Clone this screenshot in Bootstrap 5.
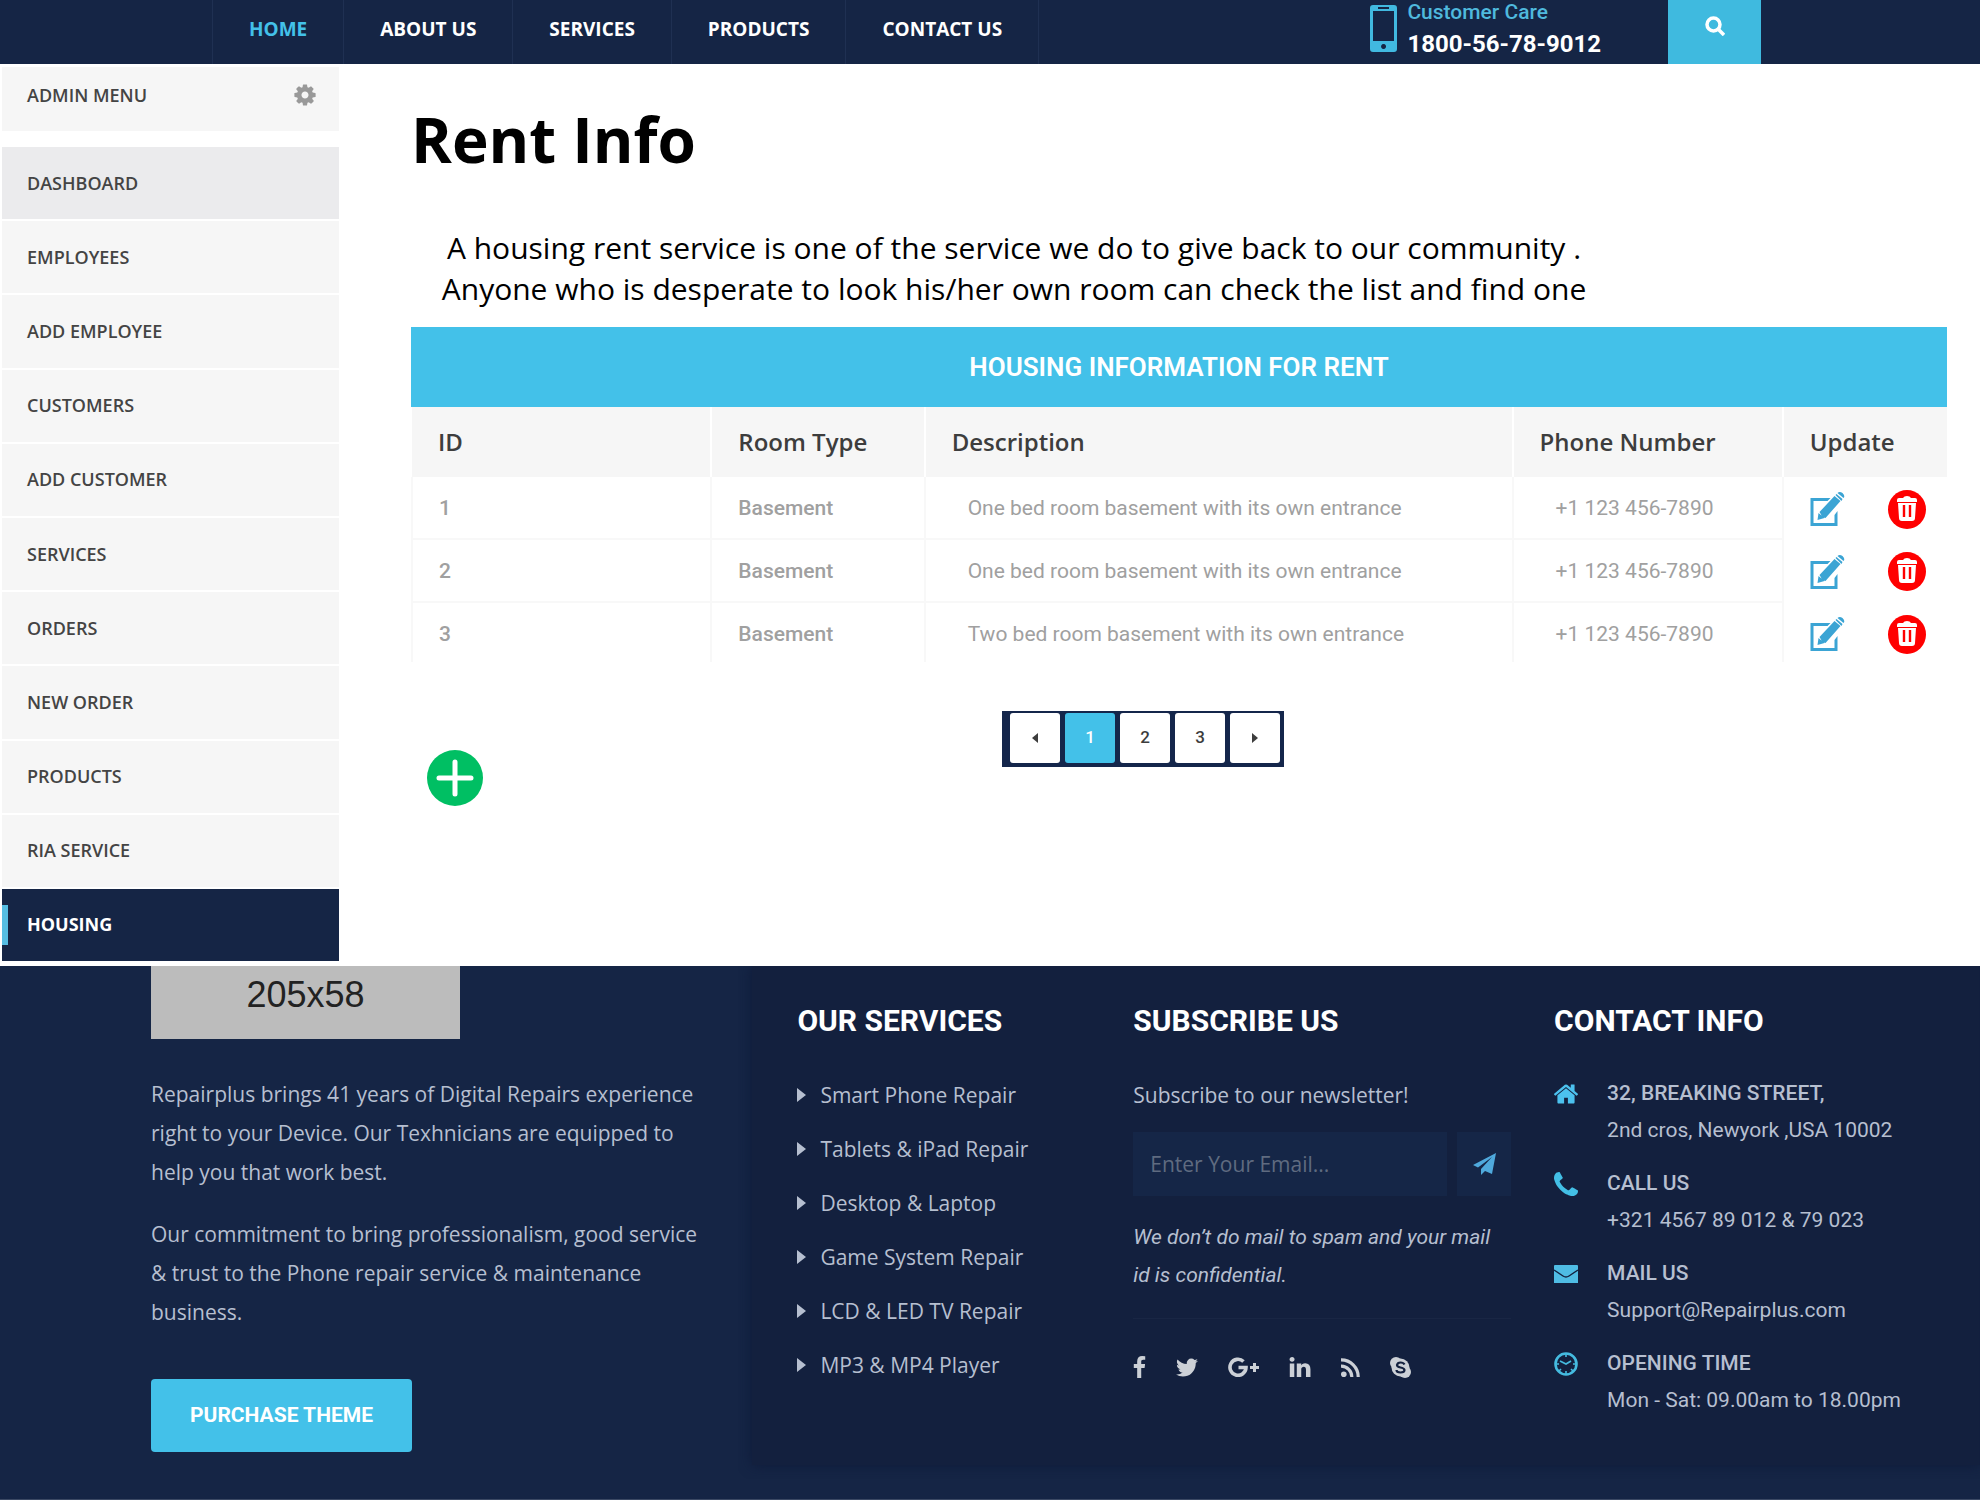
<!DOCTYPE html>
<html lang="en">
<head>
<meta charset="utf-8">
<meta name="viewport" content="width=device-width, initial-scale=1">
<title>Rent Info</title>
<link href="https://cdn.jsdelivr.net/npm/bootstrap@5.3.0/dist/css/bootstrap.min.css" rel="stylesheet">
<style>
  :root { --navy:#152545; --deep:#13203e; --sky:#43c1e9; --panel:#f6f6f6; }
  body { font-family:"Open Sans","Noto Sans",sans-serif; background:#fff; color:#000; }
  a { text-decoration:none; }
  svg { display:block; flex:none; }
  .roboto { font-family:Roboto,"Liberation Sans",sans-serif; }

  /* top bar */
  .topbar { background:var(--navy); height:64px; padding-left:212px; padding-right:219px; }
  .topbar .nav-link { padding:0 36px 6px; border-right:1px solid #1f3052; line-height:58px; font-size:19px; font-weight:700; color:#fff; }
  .topbar .nav-item:first-child .nav-link { border-left:1px solid #1f3052; }
  .topbar .nav-link.active { color:var(--sky); }
  .care { gap:10px; margin-right:67px; padding-top:5px; }
  .care-title { color:#4fb9dd; font-size:21px; line-height:20px; font-weight:500; padding-bottom:8px; margin-top:-3px; }
  .care-phone { color:#fff; font-size:24px; line-height:28px; font-weight:700; }
  .search-btn { width:93px; height:64px; background:#3fbadf; border:0; padding:0 0 12px; }

  /* sidebar */
  .side { width:339px; padding:3px 0 5px 2px; font-size:18px; font-weight:600; }
  .side-head { height:64px; background:var(--panel); padding:0 23px 8px 25px; color:#444; margin-bottom:16px; }
  .side-list { gap:2px; }
  .side-list a { background:var(--panel); color:#444; padding-left:25px; position:relative; }
  .side-list a.current { background:#ebebed; }
  .side-list a.picked { background:var(--navy); color:#fff; font-weight:700; }
  .side-list a.picked::before { content:""; position:absolute; left:0; top:16px; bottom:16px; width:6px; background:#55bde2; }

  /* content */
  .content { padding:35px 33px 160px 72px; min-width:0; }
  .content h1 { font-size:62px; line-height:80px; font-weight:700; margin:0 0 48px; }
  .intro { font-size:30px; line-height:41px; margin:0 330px 18px 0; text-align:center; white-space:nowrap; }
  .rent { table-layout:fixed; width:100%; margin:0; }
  .rent caption { caption-side:top; background:var(--sky); color:#fff; text-align:center; font-size:26px; line-height:80px; font-weight:600; padding:0; }
  .rent th, .rent td { border-right:2px solid #f8f8f8; }
  .rent tr > :last-child { border-right:0; }
  .rent thead th { background:var(--panel); border-right-color:#fff; color:#3d3d3d; font-size:24px; line-height:70px; font-weight:600; padding:0 0 0 26px; white-space:nowrap; }
  .rent tbody th, .rent tbody td { color:#a0a0a0; font-size:21px; line-height:55px; padding:4px 0 2px 26px; border-bottom:2px solid #f8f8f8; vertical-align:middle; white-space:nowrap; }
  .rent tbody th { font-weight:500; border-left:2px solid #f8f8f8; }
  .rent tbody td.kind { font-weight:500; }
  .rent tbody td.wide { padding-left:42px; }
  .rent tbody td:last-child { border-bottom:0; }
  .rent tbody tr:last-child > * { border-bottom:0; padding-bottom:0; }
  .acts { gap:43px; }
  .acts button, .add-btn { border:0; padding:0; background:none; }
  .tools { margin-top:49px; }
  .add-btn { margin:39px 0 0 16px; }
  .pager { margin-left:33.8%; background:#14264b; padding:2px 4px 4px 8px; gap:5px; height:56px; }
  .pager .page-link { width:50px; height:50px; border:0; border-radius:3px; padding:0; display:flex; align-items:center; justify-content:center; background:#fff; color:#3d3d3d; font-size:17px; font-weight:500; }
  .pager .active .page-link { background:var(--sky); color:#fff; }

  /* footer */
  .foot { background:var(--navy); color:#b6bfd0; border-bottom:1px solid #3b4964; padding-bottom:34px; }
  .about { width:38%; padding-left:151px; padding-right:40px; font-size:21px; line-height:39px; }
  .logo-box { width:309px; background:#bcbcbc; color:#222; font:36px/57px "Liberation Sans",Arial,sans-serif; padding-bottom:16px; text-align:center; margin-bottom:36px; }
  .about p { margin-bottom:23px; white-space:nowrap; }
  .buy { margin-top:24px; background:var(--sky); color:#fff; border:0; border-radius:4px; width:261px; height:73px; font-size:21px; font-weight:700; }
  .foot-main { width:62%; background:var(--deep); padding:37px 32px 46px 45px; box-shadow:0 0 12px #0e1a39; clip-path:inset(0 0 -14px -14px); display:grid; grid-template-columns:336fr 421fr 394fr; }
  .foot h2 { font-size:30px; line-height:36px; font-weight:700; color:#fff; margin:0 0 29px; }
  .links { font-size:21px; line-height:54px; }
  .links a { color:#b6bfd0; display:flex; align-items:center; gap:14px; }
  .news { font-size:21px; line-height:54px; margin-right:43px; }
  .news-form { gap:10px; margin:10px 0 22px; }
  .news-form input { height:64px; border:0; border-radius:0; background:#152647; color:#b6bfd0; font-size:21px; padding:0 17px; min-width:0; }
  .news-form input::placeholder { color:#5f6b80; opacity:1; }
  .news-form button { width:54px; height:64px; border:0; border-radius:0; background:#152647; padding:0; flex:none; display:flex; align-items:center; justify-content:center; }
  .note { font-size:21px; line-height:38px; font-style:italic; padding-bottom:24px; border-bottom:1px solid #192644; margin-bottom:37px; white-space:nowrap; }
  .social { gap:30px; }
  .social a { color:#ccd0d6; }
  .reach { gap:16px; margin-top:36px; font-size:21px; line-height:37px; }
  .reach li { display:flex; gap:29px; }
  .reach svg { margin-top:7px; }
  .reach strong { font-weight:500; display:block; }
</style>
</head>
<body>
<svg class="d-none" aria-hidden="true">
  <symbol id="edit" viewBox="0 0 34 34">
    <path d="M20 6H0v28h27V19l-3 4v8H3V9h14z" fill="#3ba4d4"/>
    <path d="M9 20 24 4l6 5-15 17-3-1zM25 3l1-1 6 5-1 2zM27 1q2-2 5 0 3 3 1 5zM8 21l6 5-7 2z" fill="#3ba4d4"/>
  </symbol>
  <symbol id="bin" viewBox="0 0 38 39">
    <ellipse cx="19" cy="19.500" rx="19" ry="19.500" fill="#f00"/>
    <path d="M9 10q0-2 2-2h4q1-2 4-2t4 2h4q2 0 2 2v2H9zM10 13h18l-1 15q0 3-3 3H14q-3 0-3-3z" fill="#fff"/>
    <path d="M16 15v12M22 15v12" stroke="#f00" stroke-width="2.400"/>
  </symbol>
  <symbol id="caret" viewBox="0 0 9 14"><path d="M0 0 9 7 0 14z" fill="currentColor"/></symbol>
</svg>

<header class="topbar d-flex">
  <nav aria-label="Main">
    <ul class="nav flex-nowrap">
      <li class="nav-item"><a class="nav-link active" href="#">HOME</a></li>
      <li class="nav-item"><a class="nav-link" href="#">ABOUT US</a></li>
      <li class="nav-item"><a class="nav-link" href="#">SERVICES</a></li>
      <li class="nav-item"><a class="nav-link" href="#">PRODUCTS</a></li>
      <li class="nav-item"><a class="nav-link" href="#">CONTACT US</a></li>
    </ul>
  </nav>
  <div class="care d-flex ms-auto roboto">
    <svg width="27" height="47" viewBox="0 0 27 47" aria-hidden="true"><path fill="#41b9e0" fill-rule="evenodd" d="M3 0h21q3 0 3 3v41q0 3-3 3H3q-3 0-3-3V3q0-3 3-3zM3 6v30h21V6zM8 2v2h11V2zM13.500 39a2.500 2.500 0 1 0 .1 0z"/></svg>
    <div>
      <div class="care-title">Customer Care</div>
      <div class="care-phone">1800-56-78-9012</div>
    </div>
  </div>
  <button class="search-btn d-flex align-items-center justify-content-center" type="button" aria-label="Search">
    <svg width="20" height="20" viewBox="0 0 20 20" fill="none" stroke="#fff" stroke-width="3.500"><circle cx="8.500" cy="8.500" r="6.500"/><path d="m13 13 6 6"/></svg>
  </button>
</header>

<div class="d-flex">
  <aside class="side d-flex flex-column flex-shrink-0">
    <div class="side-head d-flex align-items-center justify-content-between">
      <span>ADMIN MENU</span>
      <svg width="22" height="22" viewBox="100 100 1592 1592" fill="#999" aria-hidden="true"><path d="M1152 896q0-106-75-181t-181-75-181 75-75 181 75 181 181 75 181-75 75-181zm512-109v222q0 12-8 23t-20 13l-185 28q-19 54-39 91 35 50 107 138 10 12 10 25t-9 23q-27 37-99 108t-94 71q-12 0-26-9l-138-108q-44 23-91 38-16 136-29 186-7 28-36 28h-222q-14 0-24.500-8.500t-11.500-21.500l-28-184q-49-16-90-37l-141 107q-10 9-25 9-14 0-25-11-126-114-165-168-7-10-7-23 0-12 8-23 15-21 51-66.500t54-70.500q-27-50-41-99l-183-27q-13-2-21-12.500t-8-23.500v-222q0-12 8-23t19-13l186-28q14-46 39-92-40-57-107-138-10-12-10-24 0-10 9-23 26-36 98.500-107.500t94.500-71.500q13 0 26 10l138 107q44-23 91-38 16-136 29-186 7-28 36-28h222q14 0 24.500 8.500t11.500 21.500l28 184q49 16 90 37l142-107q9-9 24-9 13 0 25 10 129 119 165 170 7 8 7 22 0 12-8 23-15 21-51 66.500t-54 70.500q26 50 41 98l183 28q13 2 21 12.500t8 23.500z"/></svg>
    </div>
    <nav class="side-list d-flex flex-column flex-fill" aria-label="Admin">
      <a class="current d-flex align-items-center flex-fill" href="#">DASHBOARD</a>
      <a class="d-flex align-items-center flex-fill" href="#">EMPLOYEES</a>
      <a class="d-flex align-items-center flex-fill" href="#">ADD EMPLOYEE</a>
      <a class="d-flex align-items-center flex-fill" href="#">CUSTOMERS</a>
      <a class="d-flex align-items-center flex-fill" href="#">ADD CUSTOMER</a>
      <a class="d-flex align-items-center flex-fill" href="#">SERVICES</a>
      <a class="d-flex align-items-center flex-fill" href="#">ORDERS</a>
      <a class="d-flex align-items-center flex-fill" href="#">NEW ORDER</a>
      <a class="d-flex align-items-center flex-fill" href="#">PRODUCTS</a>
      <a class="d-flex align-items-center flex-fill" href="#">RIA SERVICE</a>
      <a class="picked d-flex align-items-center flex-fill" href="#">HOUSING</a>
    </nav>
  </aside>

  <main class="content flex-fill">
    <h1>Rent Info</h1>
    <p class="intro">A housing rent service is one of the service we do to give back to our community .<br>Anyone who is desperate to look his/her own room can check the list and find one</p>
    <table class="rent">
      <caption class="roboto">HOUSING INFORMATION FOR RENT</caption>
      <colgroup><col style="width:19.5%"><col style="width:13.9%"><col style="width:38.3%"><col style="width:17.6%"><col></colgroup>
      <thead>
        <tr><th scope="col">ID</th><th scope="col">Room Type</th><th scope="col">Description</th><th scope="col">Phone Number</th><th scope="col">Update</th></tr>
      </thead>
      <tbody class="roboto">
        <tr>
          <th scope="row">1</th><td class="kind">Basement</td><td class="wide">One bed room basement with its own entrance</td><td class="wide">+1 123 456-7890</td>
          <td><div class="acts d-flex"><button type="button" aria-label="Edit"><svg width="35" height="34"><use href="#edit"/></svg></button><button type="button" aria-label="Delete"><svg width="38" height="39"><use href="#bin"/></svg></button></div></td>
        </tr>
        <tr>
          <th scope="row">2</th><td class="kind">Basement</td><td class="wide">One bed room basement with its own entrance</td><td class="wide">+1 123 456-7890</td>
          <td><div class="acts d-flex"><button type="button" aria-label="Edit"><svg width="35" height="34"><use href="#edit"/></svg></button><button type="button" aria-label="Delete"><svg width="38" height="39"><use href="#bin"/></svg></button></div></td>
        </tr>
        <tr>
          <th scope="row">3</th><td class="kind">Basement</td><td class="wide">Two bed room basement with its own entrance</td><td class="wide">+1 123 456-7890</td>
          <td><div class="acts d-flex"><button type="button" aria-label="Edit"><svg width="35" height="34"><use href="#edit"/></svg></button><button type="button" aria-label="Delete"><svg width="38" height="39"><use href="#bin"/></svg></button></div></td>
        </tr>
      </tbody>
    </table>
    <div class="tools d-flex align-items-start">
      <button class="add-btn" type="button" aria-label="Add room"><svg width="56" height="56" viewBox="0 0 56 56"><circle cx="28" cy="28" r="28" fill="#00bf63"/><path d="M28 12v32M12 28h32" stroke="#fff" stroke-width="5" stroke-linecap="round"/></svg></button>
      <ul class="pager list-unstyled d-flex mb-0 roboto">
        <li><a class="page-link" href="#" aria-label="Previous"><svg width="6" height="10" viewBox="0 0 6 10"><path d="M6 0 0 5l6 5z" fill="currentColor"/></svg></a></li>
        <li class="active"><a class="page-link" href="#">1</a></li>
        <li><a class="page-link" href="#">2</a></li>
        <li><a class="page-link" href="#">3</a></li>
        <li><a class="page-link" href="#" aria-label="Next"><svg width="6" height="10" viewBox="0 0 6 10"><path d="m0 0 6 5-6 5z" fill="currentColor"/></svg></a></li>
      </ul>
    </div>
  </main>
</div>

<footer class="foot d-flex">
  <section class="about">
    <div class="logo-box">205x58</div>
    <p>Repairplus brings 41 years of Digital Repairs experience<br>right to your Device. Our Texhnicians are equipped to<br>help you that work best.</p>
    <p>Our commitment to bring professionalism, good service<br>&amp; trust to the Phone repair service &amp; maintenance<br>business.</p>
    <button class="buy roboto" type="button">PURCHASE THEME</button>
  </section>
  <div class="foot-main">
    <section>
      <h2 class="roboto">OUR SERVICES</h2>
      <ul class="links list-unstyled mb-0">
        <li><a href="#"><svg width="9" height="14"><use href="#caret"/></svg>Smart Phone Repair</a></li>
        <li><a href="#"><svg width="9" height="14"><use href="#caret"/></svg>Tablets &amp; iPad Repair</a></li>
        <li><a href="#"><svg width="9" height="14"><use href="#caret"/></svg>Desktop &amp; Laptop</a></li>
        <li><a href="#"><svg width="9" height="14"><use href="#caret"/></svg>Game System Repair</a></li>
        <li><a href="#"><svg width="9" height="14"><use href="#caret"/></svg>LCD &amp; LED TV Repair</a></li>
        <li><a href="#"><svg width="9" height="14"><use href="#caret"/></svg>MP3 &amp; MP4 Player</a></li>
      </ul>
    </section>
    <section class="news">
      <h2 class="roboto">SUBSCRIBE US</h2>
      <label class="d-block" for="email">Subscribe to our newsletter!</label>
      <form class="news-form d-flex">
        <input class="form-control" id="email" type="email" placeholder="Enter Your Email...">
        <button type="submit" aria-label="Send"><svg width="23" height="22" viewBox="0 0 23 22" fill="#4fa9dc"><path d="M23 0 0 12l5 2.500L19 4 8 16v6l4-4 7 3z"/></svg></button>
      </form>
      <p class="note roboto">We don’t do mail to spam and your mail<br>id is confidential.</p>
      <div class="social d-flex align-items-center">
        <a href="#" aria-label="Facebook"><svg width="13" height="22" viewBox="470 0 880 1664" fill="currentColor"><path d="M1343 12v264h-157q-86 0-116 36t-30 108v189h293l-39 296h-254v759h-306v-759h-255v-296h255v-218q0-186 104-288.500t277-102.500q147 0 228 12z"/></svg></a>
        <a href="#" aria-label="Twitter"><svg width="22" height="19" viewBox="108 256 1576 1280" fill="currentColor"><path d="M1684 408q-67 98-162 167 1 14 1 42 0 130-38 259.500t-115.500 248.500-184.500 210.500-258 146-323 54.500q-271 0-496-145 35 4 78 4 225 0 401-138-105-2-188-64.500t-114-159.500q33 5 61 5 43 0 85-11-112-23-185.500-111.500t-73.500-205.500v-4q68 38 146 41-66-44-105-115t-39-154q0-88 44-163 121 149 294.500 238.500t371.500 99.500q-8-38-8-74 0-134 94.500-228.500t228.500-94.500q140 0 236 102 109-21 205-78-37 115-142 178 93-10 186-50z"/></svg></a>
        <a href="#" aria-label="Google Plus"><svg width="31" height="20" viewBox="0 0 31 20" fill="none" stroke="currentColor"><path d="M15.500 4.500A8 8 0 1 0 18 10.500H10.500" stroke-width="3.600"/><path d="M26.500 6v9M22 10.500h9" stroke-width="3"/></svg></a>
        <a href="#" aria-label="LinkedIn"><svg width="22" height="20" viewBox="128 148 1536 1468" fill="currentColor"><path d="M477 625v991h-330v-991h330zm21-306q1 73-50.500 122t-135.500 49h-2q-82 0-132-49t-50-122q0-74 51.500-122.500t134.500-48.500 133 48.500 51 122.500zm1166 729v568h-329v-530q0-105-40.500-164.500t-126.500-59.500q-63 0-105.500 34.500t-63.500 85.500q-11 30-11 81v553h-329q2-399 2-647t-1-296l-1-48h329v144h-2q20-32 41-56t56.500-52 87-43.500 114.500-15.500q171 0 275 113.500t104 332.500z"/></svg></a>
        <a href="#" aria-label="RSS"><svg width="19" height="19" viewBox="0 0 19 19"><circle cx="2.800" cy="16.200" r="2.800" fill="currentColor"/><path d="M0 8.200A10.500 10.500 0 0 1 10.800 19M0 1.800A17 17 0 0 1 17.200 19" fill="none" stroke="currentColor" stroke-width="3.200"/></svg></a>
        <a href="#" aria-label="Skype"><svg width="21" height="21" viewBox="0 0 21 21"><g fill="currentColor"><circle cx="10.500" cy="10.500" r="9"/><circle cx="6" cy="6" r="6"/><circle cx="15" cy="15" r="6"/></g><path d="M14.500 7.500Q13.500 5.500 10.500 5.500T7 8q0 2 3.500 2.500T14.500 13q0 2.500-4 2.500T6.500 13" fill="none" stroke="#13203e" stroke-width="2.200"/></svg></a>
      </div>
    </section>
    <section class="roboto">
      <h2 class="mb-0">CONTACT INFO</h2>
      <ul class="reach list-unstyled d-flex flex-column mb-0">
        <li><svg width="24" height="24" viewBox="90 90 1612 1612" fill="#4cc1ee"><path d="M1472 992v480q0 26-19 45t-45 19h-384v-384h-256v384h-384q-26 0-45-19t-19-45v-480q0-1 .5-3t.5-3l575-474 575 474q1 2 1 6zm223-69l-62 74q-8 9-21 11h-3q-13 0-21-7l-692-577-692 577q-12 8-24 7-13-2-21-11l-62-74q-8-10-7-23.500t11-21.500l719-599q32-26 76-26t76 26l244 204v-195q0-14 9-23t23-9h192q14 0 23 9t9 23v408l219 182q10 8 11 21.500t-7 23.500z"/></svg><div><strong>32, BREAKING STREET,</strong>2nd cros, Newyork ,USA 10002</div></li>
        <li><svg width="24" height="24" viewBox="192 128 1408 1408" fill="#43bfe6"><path d="M1600 1240q0 27-10 70.500t-21 68.500q-21 50-122 106-94 51-186 51-27 0-53-3.500t-57.500-12.500-47-14.500-55.500-20.500-49-18q-98-35-175-83-127-79-264-216t-216-264q-48-77-83-175-3-9-18-49t-20.500-55.500-14.500-47-12.500-57.500-3.500-53q0-92 51-186 56-101 106-122 25-11 68.500-21t70.500-10q14 0 21 3 18 6 53 76 11 19 30 54t35 63.500 31 53.500q3 4 17.500 25t21.500 35.500 7 28.500q0 20-28.500 50t-62 55-62 53-28.500 46q0 9 5 22.500t8.500 20.500 14 24 11.500 19q76 137 174 235t235 174q2 1 19 11.500t24 14 20.500 8.500 22.500 5q18 0 46-28.500t53-62 55-62 50-28.500q14 0 28.500 7t35.500 21.500 25 17.500q25 15 53.500 31t63.500 35 54 30q70 35 76 53 3 7 3 21z"/></svg><div><strong>CALL US</strong>+321 4567 89 012 &amp; 79 023</div></li>
        <li><svg width="24" height="24" viewBox="0 0 24 24"><path d="M0 4q0-1 1-1h22q1 0 1 1v17H0z" fill="#4fbce4"/><path d="m0 8 9 6q3 2 6 0l9-6" fill="none" stroke="#13203e" stroke-width="1.400"/></svg><div><strong>MAIL US</strong>Support@Repairplus.com</div></li>
        <li><svg width="24" height="24" viewBox="0 0 24 24" fill="none" stroke="#45bbe0"><circle cx="12" cy="12" r="10.500" stroke-width="2.600"/><path d="m6 9 6 3 5-3" stroke-width="1.800"/><path d="M12 2v3M12 19v3M2 12h3M19 12h3M17 17l2 2M7 17l-2 2" stroke-width="1.600"/></svg><div><strong>OPENING TIME</strong>Mon - Sat: 09.00am to 18.00pm</div></li>
      </ul>
    </section>
  </div>
</footer>
<script src="https://cdn.jsdelivr.net/npm/bootstrap@5.3.0/dist/js/bootstrap.bundle.min.js"></script>
</body>
</html>
